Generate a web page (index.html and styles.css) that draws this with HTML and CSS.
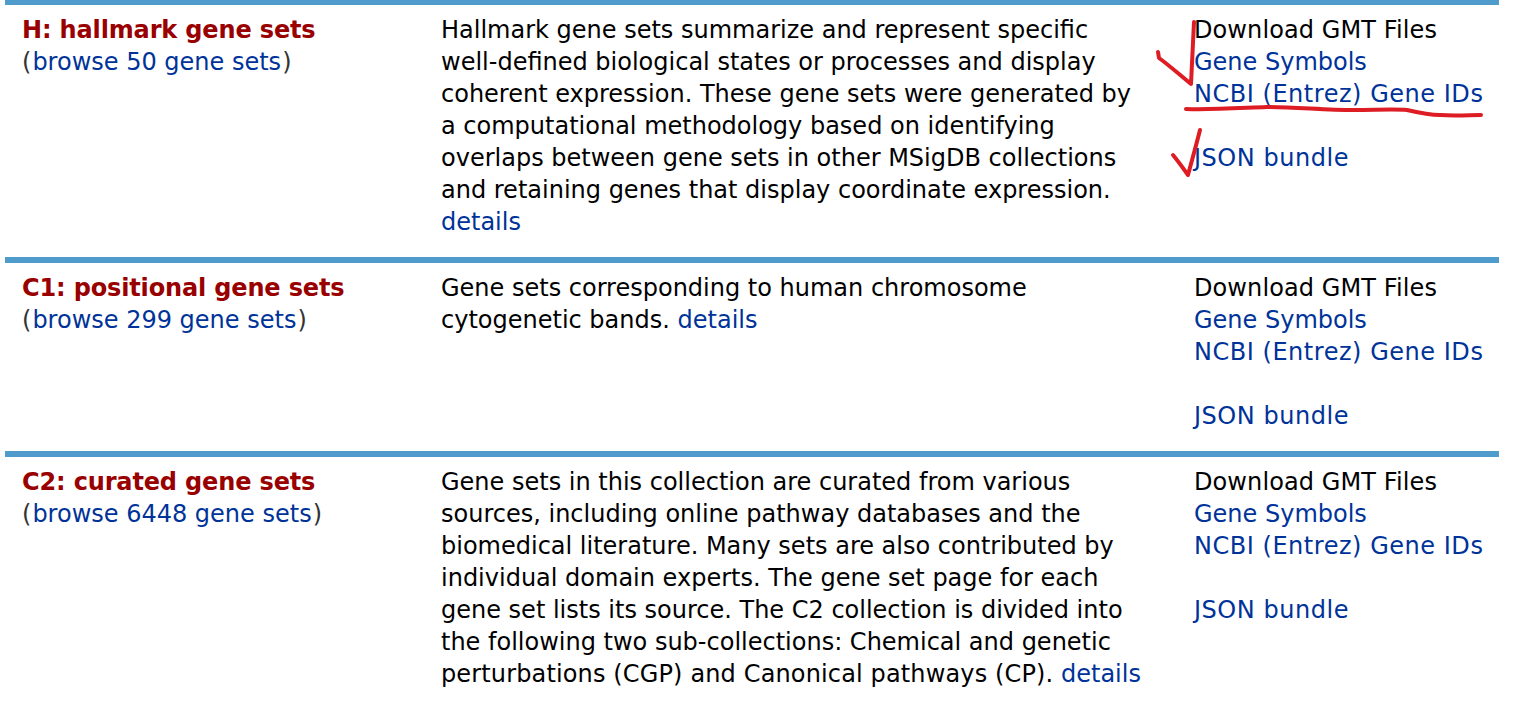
FILE: index.html
```html
<!DOCTYPE html>
<html lang="en">
<head>
<meta charset="utf-8">
<title>MSigDB collections</title>
<link rel="stylesheet" href="styles.css">
</head>
<body>
<main class="collections">
  <section class="row row-first">
    <div class="name"><h2 class="title">H: hallmark gene sets</h2>(<a href="#">browse 50 gene sets</a>)</div>
    <p class="desc">Hallmark gene sets summarize and represent specific<br>well-defined biological states or processes and display<br>coherent expression. These gene sets were generated by<br>a computational methodology based on identifying<br>overlaps between gene sets in other MSigDB collections<br>and retaining genes that display coordinate expression.<br><a href="#">details</a></p>
    <div class="files"><span class="dl">Download GMT Files</span><a href="#">Gene Symbols</a><a class="caps" href="#">NCBI (Entrez) Gene IDs</a><span class="gap"></span><a class="caps" href="#">JSON bundle</a></div>
  </section>
  <section class="row">
    <div class="name"><h2 class="title">C1: positional gene sets</h2>(<a href="#">browse 299 gene sets</a>)</div>
    <p class="desc">Gene sets corresponding to human chromosome<br>cytogenetic bands. <a href="#">details</a></p>
    <div class="files"><span class="dl">Download GMT Files</span><a href="#">Gene Symbols</a><a class="caps" href="#">NCBI (Entrez) Gene IDs</a><span class="gap"></span><a class="caps" href="#">JSON bundle</a></div>
  </section>
  <section class="row">
    <div class="name"><h2 class="title">C2: curated gene sets</h2>(<a href="#">browse 6448 gene sets</a>)</div>
    <p class="desc">Gene sets in this collection are curated from various<br>sources, including online pathway databases and the<br>biomedical literature. Many sets are also contributed by<br>individual domain experts. The gene set page for each<br>gene set lists its source. The C2 collection is divided into<br>the following two sub-collections: Chemical and genetic<br><span class="wide">perturbations (CGP) and Canonical pathways (CP).</span> <a href="#">details</a></p>
    <div class="files"><span class="dl">Download GMT Files</span><a href="#">Gene Symbols</a><a class="caps" href="#">NCBI (Entrez) Gene IDs</a><span class="gap"></span><a class="caps" href="#">JSON bundle</a></div>
  </section>
</main>
<svg class="ink" width="1523" height="702" viewBox="0 0 1523 702" aria-hidden="true">
  <path d="M1194 22 C1193 42 1192 63 1191 84 C1181 76 1170 66 1159 58 L1158 52"/>
  <path d="M1186 109 C1210 110 1240 108 1267 107 C1295 107 1325 110 1353 110 C1375 110 1395 109 1407 110 C1420 113 1430 115 1440 115 C1455 116 1470 115 1481 115"/>
  <path d="M1200 130 C1196 146 1192 160 1188 175 C1183 168 1178 161 1173 155"/>
</svg>
</body>
</html>
```
FILE: styles.css
```css
html, body {
  margin: 0;
  padding: 0;
  background: #fff;
}
body {
  font-family: "DejaVu Sans", Verdana, sans-serif;
  font-size: 24px;
  line-height: 32px;
  color: #000;
  height: 702px;
  overflow: hidden;
  position: relative;
}
a {
  color: #003399;
  text-decoration: none;
}
.collections {
  margin-left: 5px;
  width: 1494px;
}
.row {
  display: grid;
  grid-template-columns: 419px 753px 1fr;
  padding: 9px 0 19px 17px;
  border-top: 6px solid #4f9bcb;
}
.row-first {
  border-top-width: 5px;
}
.name {
  color: #333;
  white-space: nowrap;
}
.name a {
  margin: 0 1px;
}
.title {
  margin: 0;
  font: inherit;
  font-weight: bold;
  letter-spacing: -0.15px;
  color: #990000;
}
.desc {
  margin: 0;
  white-space: nowrap;
}
.wide {
  letter-spacing: 0.14px;
}
.files {
  display: flex;
  flex-direction: column;
  white-space: nowrap;
}
.dl {
  letter-spacing: 0.1px;
}
.caps {
  letter-spacing: 0.53px;
}
.gap {
  height: 32px;
}
.ink {
  position: absolute;
  left: 0;
  top: 0;
  fill: none;
  stroke: #dd1c24;
  stroke-width: 4;
  stroke-linecap: round;
  stroke-linejoin: round;
  pointer-events: none;
}
```
